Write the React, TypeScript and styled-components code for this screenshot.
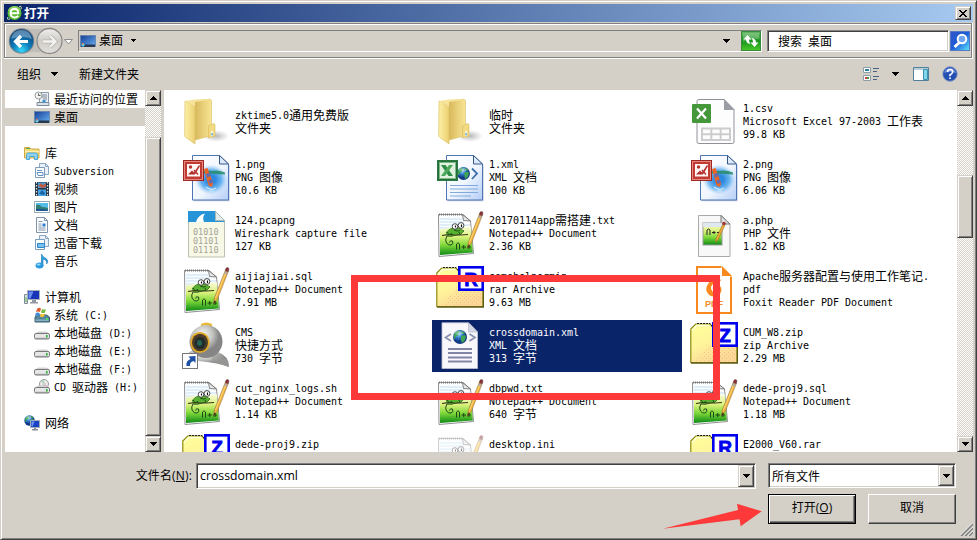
import React from "react";
import styled, { createGlobalStyle, css } from "styled-components";

const FACE = "#d4d0c8";
const CJK = '"Noto Sans CJK SC", sans-serif';

const Global = createGlobalStyle`
  * { box-sizing: border-box; }
  html, body { margin: 0; padding: 0; }
  body { width: 977px; height: 540px; overflow: hidden; background: ${FACE}; color: #000; }
  svg { display: block; flex: none; }
`;

const raised = css`
  background: ${FACE};
  border: 1px solid;
  border-color: ${FACE} #404040 #404040 ${FACE};
  box-shadow: inset 1px 1px #fff, inset -1px -1px #808080;
`;
const sunken = css`
  border: 1px solid;
  border-color: #808080 #fff #fff #808080;
  box-shadow: inset 1px 1px #404040, inset -1px -1px ${FACE};
`;

const Window = styled.div`
  position: relative;
  display: flex;
  flex-direction: column;
  width: 977px;
  height: 540px;
  padding: 3px 2px 0 3px;
  background: ${FACE};
  border: 1px solid;
  border-color: ${FACE} #404040 #404040 ${FACE};
  box-shadow: inset 1px 1px #fff, inset -1px -1px #808080;
  font: 12px/13px ${CJK};
`;
const TitleBar = styled.div`
  display: flex;
  align-items: center;
  width: 969px;
  height: 18px;
  padding: 0 2px 0 3px;
  background: linear-gradient(90deg, #0a246a, #a6caf0);
`;
const Title = styled.div`
  flex: 1;
  padding-left: 2px;
  color: #fff;
  font-size: 12.5px;
  font-weight: 700;
  line-height: 18px;
`;
const CloseButton = styled.button`
  ${raised}
  display: flex;
  align-items: center;
  justify-content: center;
  width: 16px;
  height: 14px;
  padding: 0;
`;
const Band = styled.div`
  width: 969px;
  height: 36px;
  margin-top: 1px;
  border: solid #fff;
  border-width: 0 1px 1px 0;
`;
const BandInner = styled.div`
  display: flex;
  align-items: center;
  height: 35px;
  padding-left: 3px;
  border: 1px solid #808080;
  box-shadow: inset 1px 1px #fff;
`;
const AddressBar = styled.div`
  display: flex;
  align-items: center;
  width: 684px;
  height: 22px;
  margin-left: 5px;
  border: 1px solid;
  border-color: #808080 #fff #fff #808080;
`;
const AddressText = styled.span`
  flex: 1;
  display: flex;
  align-items: center;
  padding-left: 1px;
`;
const AddressLabel = styled.span`
  margin: -2px 8px 0 3px;
`;
const SearchBox = styled.div`
  ${sunken}
  width: 182px;
  height: 22px;
  margin: 0 1px 0 5px;
  padding-left: 10px;
  background: #fff;
  line-height: 20px;
`;
const Toolbar = styled.div`
  display: flex;
  align-items: center;
  width: 969px;
  height: 31px;
  padding: 0 15px 1px 13px;
`;
const ToolLabel = styled.span<{ $gap?: number }>`
  margin: -1px ${(p) => p.$gap ?? 0}px 0 0;
`;
const ArrowCell = styled.span<{ $right: number }>`
  margin-right: ${(p) => p.$right}px;
`;
const ViewTools = styled.div`
  display: flex;
  align-items: center;
  gap: 13px;
  margin-left: auto;
`;

const Body = styled.div`
  display: flex;
  height: 362px;
  padding-left: 1px;
  width: 969px;
`;
const NavPane = styled.div`
  width: 140px;
  height: 362px;
  background: #fff;
`;
const Mixed = styled.span`
  margin-top: -2px;
  white-space: pre;
`;
const Latin = styled.span`
  font: 10px/10px "DejaVu Sans Mono", monospace;
  letter-spacing: -0.02px;
  vertical-align: 1px;
`;
const NavRow = styled.div<{ $root?: boolean; $active?: boolean; $gap?: boolean }>`
  display: flex;
  align-items: center;
  gap: ${(p) => (p.$root ? 5 : 4)}px;
  height: 18px;
  margin-top: ${(p) => (p.$gap ? 18 : 0)}px;
  padding-left: ${(p) => (p.$root ? 19 : 29)}px;
  background: ${(p) => (p.$active ? FACE : "transparent")};
`;
const Files = styled.div`
  flex: 1;
  display: grid;
  grid-template-columns: repeat(3, 250px);
  grid-auto-rows: 52px;
  gap: 4px;
  height: 362px;
  margin-left: 3px;
  padding: 6px 0 0 14px;
  overflow: hidden;
  background: #fff;
`;
const FileTile = styled.div<{ $selected?: boolean }>`
  display: flex;
  align-items: center;
  gap: 5px;
  padding-left: 4px;
  background: ${(p) => (p.$selected ? "#0a246a" : "transparent")};
  color: ${(p) => (p.$selected ? "#fff" : "#000")};
`;
const Lines = styled.div<{ $top?: boolean }>`
  display: flex;
  flex-direction: column;
  ${(p) => (p.$top ? "align-self: flex-start; padding-top: 5px;" : "padding-bottom: 3px;")}
`;
const Line = styled.div`
  height: 13px;
  line-height: 13px;
  white-space: pre;
`;
const ScrollBar = styled.div`
  display: flex;
  flex-direction: column;
  width: 16px;
  height: 362px;
  background: repeating-conic-gradient(#fff 0 25%, ${FACE} 0 50%) 0 0 / 2px 2px;
`;
const ScrollButton = styled.button<{ $h?: number }>`
  ${raised}
  display: flex;
  align-items: center;
  justify-content: center;
  width: 16px;
  height: ${(p) => p.$h ?? 16}px;
  padding: 0;
`;
const Thumb = styled.div<{ $top: number; $h: number }>`
  ${raised}
  height: ${(p) => p.$h}px;
  margin: ${(p) => p.$top}px 0 auto;
`;

const Footer = styled.div`
  display: grid;
  grid-template-columns: 192px 560px 188px;
  padding-top: 11px;
`;
const FieldLabel = styled.label`
  padding-right: 4px;
  font: 12px/25px "Open Sans", ${CJK};
  letter-spacing: 0.15px;
  text-align: right;
  white-space: nowrap;
`;
const Combo = styled.div<{ $h: number }>`
  ${sunken}
  display: flex;
  height: ${(p) => p.$h}px;
  padding: 1px 1px 1px 2px;
  background: #fff;
`;
const ComboText = styled.span<{ $input?: boolean }>`
  flex: 1;
  line-height: 21px;
  padding-left: 1px;
  ${(p) => p.$input && css`font: 12.3px/22px "Open Sans", sans-serif;`}
`;
const FilterCell = styled.div`
  width: 188px;
  margin-left: 12px;
`;
const Buttons = styled.div`
  grid-column: 3;
  display: flex;
  gap: 12px;
  width: 188px;
  margin: 5px 0 0 12px;
`;
const PushButton = styled.button<{ $primary?: boolean }>`
  ${raised}
  width: 88px;
  height: 30px;
  padding: 0 0 2px;
  color: #000;
  font: 12px/24px "Open Sans", ${CJK};
  border-color: ${(p) => (p.$primary ? "#000" : "#fff #404040 #404040 #fff")};
  box-shadow: ${(p) =>
    p.$primary
      ? "inset 1px 1px #fff, inset -1px -1px #404040, inset -2px -2px #808080"
      : "inset -1px -1px #808080"};
`;
const Highlight = styled.div`
  position: absolute;
  left: 350px;
  top: 274px;
  width: 369px;
  height: 125px;
  border: 7px solid #fd3939;
`;
const Pointer = styled.svg`
  position: absolute;
  left: 659px;
  top: 499px;
`;
const Grip = styled.svg`
  position: absolute;
  right: 3px;
  bottom: 3px;
`;
const Defs = styled.svg`
  position: absolute;
`;

/* Latin runs use a 6px-pitch monospaced face beside 12px ideographs. */
function Text({ children }: { children: string }) {
  const runs = children.match(/[\x00-\x7f]+|[^\x00-\x7f]+/g) ?? [];
  return (
    <Mixed>
      {runs.map((r, i) => (r.charCodeAt(0) < 128 ? <Latin key={i}>{r}</Latin> : r))}
    </Mixed>
  );
}

const Arrow = ({ up }: { up?: boolean }) => (
  <svg width="7" height="4" viewBox="0 0 7 4" shapeRendering="crispEdges">
    <path d={up ? "M3 0h1v1h1v1h1v1h1v1H0V3h1V2h1V1h1z" : "M0 0h7v1H6v1H5v1H4v1H3V3H2V2H1V1H0z"} />
  </svg>
);
const SmallArrow = () => (
  <svg width="5" height="3" viewBox="0 0 5 3" shapeRendering="crispEdges">
    <path d="M0 0h5v1H4v1H3v1H2V2H1V1H0z" />
  </svg>
);

const Gradients = () => (
  <Defs width="0" height="0">
    <defs>
      <linearGradient id="fold" x1="0" x2="1"><stop offset="0" stopColor="#fdf0a8" /><stop offset="1" stopColor="#ecd070" /></linearGradient>
      <linearGradient id="foldB" x1="0" x2="1"><stop offset="0" stopColor="#d9b95c" /><stop offset="1" stopColor="#f8e595" /></linearGradient>
      <radialGradient id="shade"><stop offset="0" stopColor="#888" stopOpacity=".6" /><stop offset="1" stopColor="#999" stopOpacity="0" /></radialGradient>
      <linearGradient id="sheet" x1="0" y1="0" x2="1" y2="1"><stop offset="0" stopColor="#fff" /><stop offset=".55" stopColor="#f0f6ff" /><stop offset="1" stopColor="#b4cdf6" /></linearGradient>
      <radialGradient id="lake"><stop offset=".3" stopColor="#2e8ae0" /><stop offset=".65" stopColor="#58abed" stopOpacity=".85" /><stop offset="1" stopColor="#9fd0fa" stopOpacity="0" /></radialGradient>
      <linearGradient id="grass" x1="0" y1="0" x2="0" y2="1"><stop offset="0" stopColor="#f8fcd8" /><stop offset=".35" stopColor="#dcf27e" /><stop offset=".65" stopColor="#7fd83a" /><stop offset="1" stopColor="#0c8a16" /></linearGradient>
      <radialGradient id="globe" cx=".4" cy=".3"><stop offset="0" stopColor="#a5dcfb" /><stop offset=".5" stopColor="#347fd0" /><stop offset="1" stopColor="#123a85" /></radialGradient>
      <radialGradient id="metal" cx=".4" cy=".3"><stop offset="0" stopColor="#fbfbf9" /><stop offset=".6" stopColor="#c3c3c0" /><stop offset="1" stopColor="#858585" /></radialGradient>
      <linearGradient id="zipbody" x1="0" y1="0" x2=".5" y2="1"><stop offset="0" stopColor="#ffff99" /><stop offset=".5" stopColor="#fff59b" /><stop offset="1" stopColor="#fad896" /></linearGradient>
      <pattern id="dither" width="4" height="4" patternUnits="userSpaceOnUse"><path d="M0 0h1v1H0zM2 2h1v1H2z" fill="#ffbd8c" /></pattern>
      <linearGradient id="desk" x1="0" y1="0" x2="1" y2="1"><stop offset="0" stopColor="#163c94" /><stop offset="1" stopColor="#68b2f3" /></linearGradient>
      <radialGradient id="back" cx=".5" cy=".9" r=".9"><stop offset="0" stopColor="#35d7f7" /><stop offset=".45" stopColor="#0c77b5" /><stop offset="1" stopColor="#0b3a6e" /></radialGradient>
      <linearGradient id="fwd" x1="0" y1="0" x2="0" y2="1"><stop offset="0" stopColor="#f0efed" /><stop offset=".5" stopColor="#cfccc7" /><stop offset="1" stopColor="#e2e0dc" /></linearGradient>
      <linearGradient id="go" x1="0" y1="0" x2="0" y2="1"><stop offset="0" stopColor="#67b765" /><stop offset=".5" stopColor="#17931b" /><stop offset="1" stopColor="#4ac827" /></linearGradient>
      <linearGradient id="find" x1="0" y1="0" x2="1" y2="1"><stop offset="0" stopColor="#3353c5" /><stop offset=".5" stopColor="#1c5ed9" /><stop offset="1" stopColor="#5eeaff" /></linearGradient>
      <linearGradient id="tray" x1="0" y1="0" x2="0" y2="1"><stop offset="0" stopColor="#c9c9c9" /><stop offset="1" stopColor="#7b7d80" /></linearGradient>
    </defs>
  </Defs>
);

const FolderIcon = () => (
  <svg width="48" height="48" viewBox="0 0 48 48">
    <ellipse cx="34" cy="38" rx="13" ry="6" fill="url(#shade)" />
    <path d="M13 2.500l15-1.300 1.500 1.300v35L13 42z" fill="url(#foldB)" stroke="#d9bd62" strokeWidth=".6" />
    <path d="M26.500 28l5-2.500 1.500 1v11.500l-6.500 2z" fill="#f2da80" stroke="#d8b95a" strokeWidth=".6" />
    <path d="M29.300 33h1.500v5h-1.500z" fill="#fff" /><path d="M29.500 35h1.200v2.500h-1.200z" fill="#3f9be6" />
    <path d="M3 3l9 4.500c.8.5 1 1 1 2V46L4 39.500c-1-.6-1.300-1.200-1.300-2.500z" fill="url(#fold)" stroke="#dcc169" strokeWidth=".7" />
    <path d="M3 3l10-1.500L27 1l-1 1-13 2v4z" fill="#f6e49b" />
  </svg>
);
const BlueSheet = () => (
  <>
    <path d="M11 2.500h26.500l9.500 8v36H11z" fill="#91a7cc" opacity=".6" transform="translate(.6 .8)" />
    <path d="M10.500 1.500h27l9 8.500v36h-36z" fill="url(#sheet)" stroke="#4e75b2" />
    <path d="M37.500 1.500V10h9z" fill="#dce9fb" stroke="#365889" />
  </>
);
const PngIcon = () => (
  <svg width="48" height="48" viewBox="0 0 48 48">
    <BlueSheet />
    <ellipse cx="29" cy="25.500" rx="16.500" ry="15" fill="url(#lake)" />
    <path d="M18 18.500q6-3 12-1.500 6-1.500 13 1.500v2q-12-1-25-1z" fill="#268b6a" opacity=".85" />
    <path d="M24 33q5 4 10 1M27 37h5" stroke="#ccebff" strokeWidth="1.200" fill="none" />
    <path d="M22 15l3.500-1 5.500 15-1 4-3.500-1.500z" fill="#ed6522" />
    <path d="M24 20l3.500-1.500 1.300 3.500-3.500 1.500zM26.300 26.500l3.500-1.500 1.200 3.500-3.500 1.500z" fill="#6869a8" />
    <rect x="1.500" y="6.500" width="20" height="20" fill="#c23a34" stroke="#9e2723" />
    <rect x="2.500" y="7.500" width="18" height="18" fill="none" stroke="#e58b7e" />
    <rect x="5" y="10" width="13" height="12.500" fill="#fff8f5" />
    <path d="M6 20.500l4-4 2 2 5-7.500 1 1-5 8.500z" fill="#b12d2b" /><circle cx="8.500" cy="13" r="1.700" fill="#b83431" />
    <path d="M12 16l4 4.500" stroke="#b83431" strokeWidth="1.500" />
  </svg>
);
const GlobeArt = ({ x, y, r }: { x: number; y: number; r: number }) => (
  <g transform={`translate(${x} ${y}) scale(${r / 7})`}>
    <circle r="7" fill="url(#globe)" />
    <path d="M-6-2q1-4 5-4.500l1 1-2 1.500 1 2-3 1-1 3-1-1zM1-1l3-1 2 1-1 4-3 3-1-3zM2-6l3 2-1 1-3-1z" fill="#3fa554" />
    <ellipse cx="-1" cy="-4" rx="4" ry="2" fill="#fff" opacity=".3" />
  </g>
);
const XmlExcelIcon = () => (
  <svg width="48" height="48" viewBox="0 0 48 48">
    <BlueSheet />
    <GlobeArt x={27.500} y={19.500} r={6.500} />
    <path d="M36 14.500l5 5-5 5.500" fill="none" stroke="#3d6fad" strokeWidth="1.800" />
    <path d="M14 31.500h28M14 35h28M14 38.500h28M14 42h21" stroke="#82a9dd" />
    <rect x="1.500" y="6.500" width="20" height="20" fill="#1f7137" stroke="#2c7742" />
    <rect x="3.500" y="8.500" width="16" height="16" fill="#dff2e0" stroke="#83b78a" />
    <path d="M5 11h4.500l7.500 11h-4.500z" fill="#2e8c44" /><path d="M17 11h-4L5 22h4z" fill="#4da75d" />
  </svg>
);
const CsvIcon = () => (
  <svg width="48" height="48" viewBox="0 0 48 48">
    <path d="M9 1.500h25l10 10V44q0 1.500-1.500 1.500H9q-2 0-2-2v-40q0-2 2-2z" fill="#fdfdfd" stroke="#8f9299" />
    <path d="M34 1l10.500 11H34z" fill="#9b9da4" />
    <path d="M12 30.500h28v11.500H12zM12 36.300h28M21.300 30.500V42M30.700 30.500V42" fill="none" stroke="#cdcdcd" strokeWidth="2" />
    <rect x="2" y="6" width="19" height="19" rx="1" fill="#45973c" />
    <path d="M7 10.500l9 10M16 10.500l-9 10" stroke="#fff" strokeWidth="2.200" />
  </svg>
);
const PcapIcon = () => (
  <svg width="48" height="48" viewBox="0 0 48 48">
    <path d="M6.500 1.500h27l9 9V47h-36z" fill="#f8f8e7" stroke="#bdc1b1" />
    <path d="M6 1h27.500v9.500h9V12H6z" fill="#2694d6" />
    <path d="M14 12Q16 5 23 3.500q-3 4-1 8.500z" fill="#fff" />
    <path d="M33.500 1.500v9h9z" fill="#e3edeb" stroke="#a9b9ba" />
    <g fill="#a4a498" fontFamily="DejaVu Sans Mono" fontSize="8.500">
      <text x="11" y="24.500">01010</text><text x="11" y="33.500">01101</text><text x="11" y="42.500">01110</text>
    </g>
  </svg>
);
const Pencil = () => (
  <g>
    <path d="M43 5l3 1.300L35.500 33l-4 5 .8-6z" fill="#f2b23c" stroke="#8a6a32" strokeWidth=".5" />
    <path d="M43.800 7L33.500 32" stroke="#ffe08a" strokeWidth=".8" />
    <path d="M32.200 34.500l2 .8L31.300 39z" fill="#4a3d28" />
    <path d="M43 4.500l1-2.300q1.500-1.500 3 .3l-.7 3.500z" fill="#8e3034" stroke="#5d4040" strokeWidth=".5" />
    <path d="M42.300 6.500l3.500 1.500" stroke="#a9a9b8" strokeWidth="1.400" />
  </g>
);
const NppIcon = ({ faded }: { faded?: boolean }) => (
  <svg width="48" height="48" viewBox="0 0 48 48">
    <g opacity={faded ? 0.45 : 1}>
      <path d="M2.500 4.500H27l7.500 6.500L37.500 43.500l-34.500 3z" fill="#fbfdff" stroke="#909090" />
      <path d="M3 4.500h24" stroke="#777" strokeDasharray="1 1" strokeWidth="2" />
      <path d="M4 9h22M4 12h24M4 15h30M4 18h30" stroke="#c4dff2" />
      <path d="M26.500 4.500l1 6 7 .5z" fill="#e8e8e8" stroke="#666" strokeWidth=".8" />
      <path d="M4 19.500q13-3 31-3l1.800 26L4 45z" fill={faded ? "#ededed" : "url(#grass)"} />
      <path d="M10 23q4-6 12-5l6 3-3 3-5 1q-5 2-9 1-2 3-1 6 2 4 5 3 3-1 1.500-4-2.500-1-3 1.500" fill="none" stroke="#234a1c" strokeWidth="1" />
      <path d="M10 23q4-6 12-5l6 3-3 3-5 1q-5 2-9 1z" fill={faded ? "#ddd" : "#58b030"} />
      <path d="M6 25.500q8-1.500 12-.5 7 0 14-.5" fill="none" stroke="#3a3a1c" strokeWidth="1.100" />
      <path d="M11 22l2 2.500M15 23l1.500 2.500M23 22l1 2.500M18 20q3 2 6 .5" fill="none" stroke="#173a12" strokeWidth=".8" />
      <circle cx="19" cy="16.500" r="2.800" fill="#fff" stroke="#333" strokeWidth=".9" /><circle cx="25" cy="15.500" r="2.900" fill="#fff" stroke="#333" strokeWidth=".9" />
      <path d="M19.500 15.500v2M25.500 14.500v2.500" stroke="#111" strokeWidth="1.200" />
      <path d="M20.500 39.500V34q1.500-2.500 3 0v5.500M25.500 37h4.500M27.700 35v4M31 37h4M33 35v4" fill="none" stroke="#16380f" strokeWidth=".9" />
      <Pencil />
    </g>
  </svg>
);
const PhpIcon = () => (
  <svg width="48" height="48" viewBox="0 0 48 48">
    <path d="M8.500 5.500h23l8.500 9V46.500H8.500z" fill="#f8f8f8" stroke="#aaa" />
    <path d="M31 5.500v8.500h9z" fill="#ddd" stroke="#777" />
    <rect x="13" y="13" width="19" height="22" fill="url(#grass)" stroke="#9b9b9b" />
    <path d="M13 13h19v4H13z" fill="#dfe8ee" />
    <path d="M17 25v-5q1.500-2 3 0v5M22 22.500h3.500M24 21v3M27 22.500h3" fill="none" stroke="#222" />
    <path d="M33 14l2 1-7 15-2.500 2.500.5-4z" fill="#edac38" stroke="#85601f" strokeWidth=".5" />
    <circle cx="34" cy="13.500" r="1.800" fill="#a1393c" />
  </svg>
);
const ArchiveIcon = ({ rar }: { rar?: boolean }) => (
  <svg width="48" height="48" viewBox="0 0 48 48">
    <path d="M.8 7l5-5H20l4 5v5h23v28.500H.8z" fill="url(#zipbody)" stroke="#8c8a10" strokeWidth="1.200" />
    <path d="M20 24h26v16H5z" fill="url(#dither)" />
    <path d="M2 8.500L6.500 3.500H19" fill="none" stroke="#ffffd9" strokeWidth="1.500" />
    <path d="M1 41h46.500V25" fill="none" stroke="#5c5a14" strokeWidth="1.500" />
    <path d="M7 1.500h13l3 4" fill="none" stroke="#222" strokeDasharray="2 1" />
    <rect x="23.300" y="1.300" width="23.400" height="22.400" fill="#fff" stroke="#0000ee" strokeWidth="2.600" />
    <text x="35" y="19.500" textAnchor="middle" fontFamily="Liberation Sans" fontWeight="700" fontSize="19" fill="#00e" stroke="#00e" strokeWidth=".8">{rar ? "R" : "Z"}</text>
  </svg>
);
const CameraIcon = () => (
  <svg width="48" height="48" viewBox="0 0 48 48">
    <path d="M5 32q10-10 31-2 11 4 11 15-9-4-30-6z" fill="url(#metal)" />
    <path d="M31 30q15 4 16 15-9-4-18-5z" fill="#9b9b98" opacity=".7" />
    <path d="M19 2q5-3 11 0v3H19z" fill="#eab832" />
    <ellipse cx="24" cy="19.500" rx="16.500" ry="16.500" fill="url(#metal)" />
    <ellipse cx="18" cy="20.500" rx="9.700" ry="10.500" fill="#e4aa22" />
    <ellipse cx="18" cy="20.500" rx="8" ry="8.800" fill="#4a3d2c" />
    <ellipse cx="18" cy="21" rx="5.500" ry="6" fill="#242b2b" /><ellipse cx="17.500" cy="21" rx="2.500" ry="3" fill="#246452" />
    <rect x=".5" y="31.500" width="15" height="15" fill="#fff" stroke="#777" />
    <path d="M4.500 44q-1-5 4-7l-2-2.500 7-.5v7l-2-2q-4 1-3.500 5z" fill="#1e4fa5" />
  </svg>
);
const XmlIcon = () => (
  <svg width="48" height="48" viewBox="0 0 48 48">
    <g transform="translate(-3 0)">
      <path d="M9 .8h26.500L44.500 10v36.500H9z" fill="#f7f7fc" stroke="#c2c2d0" strokeWidth=".8" />
      <path d="M35.500.8V10h9z" fill="#d6d7e5" stroke="#b5b7c8" strokeWidth=".7" />
      <GlobeArt x={27} y={15} r={7} />
      <path d="M18 12l-5.500 3.500 5.500 3.500M36.500 12l5.500 3.500-5.500 3.500" fill="none" stroke="#8b8fb0" strokeWidth="1.700" />
      <path d="M15 27h24M15 31h24M15 35.500h24M15 39.500h24" stroke="#8385a6" strokeWidth="1.800" />
    </g>
  </svg>
);
const PdfIcon = () => (
  <svg width="48" height="48" viewBox="0 0 48 48">
    <path d="M31.500 1H7v46h34V10.500" fill="#fff" stroke="#f7891e" strokeWidth="2" />
    <path d="M32 0l10 10H32z" fill="#f7891e" />
    <path d="M32 14q-8-2-12.500 2-4 4.500-3 9 2 5.500 8 5.500 7-1 7-7-1-6-7-5l-2 4q3-1 3 2-1 3-3 1-3-4 0-7 4-3 9.500-4.500z" fill="#f7891e" />
    <text x="24" y="40.500" textAnchor="middle" fontFamily="Liberation Sans" fontWeight="700" fontSize="9" fill="#f7891e">PDF</text>
  </svg>
);

const icons: Record<string, React.ReactNode> = {
  folder: <FolderIcon />, png: <PngIcon />, xlsxml: <XmlExcelIcon />, csv: <CsvIcon />, pcap: <PcapIcon />,
  npp: <NppIcon />, ini: <NppIcon faded />, php: <PhpIcon />, rar: <ArchiveIcon rar />, zip: <ArchiveIcon />,
  cam: <CameraIcon />, xml: <XmlIcon />, pdf: <PdfIcon />,
};

const files: [string, string[], boolean?][] = [
  ["folder", ["zktime5.0通用免费版", "文件夹"]],
  ["folder", ["临时", "文件夹"]],
  ["csv", ["1.csv", "Microsoft Excel 97-2003 工作表", "99.8 KB"]],
  ["png", ["1.png", "PNG 图像", "10.6 KB"]],
  ["xlsxml", ["1.xml", "XML 文档", "100 KB"]],
  ["png", ["2.png", "PNG 图像", "6.06 KB"]],
  ["pcap", ["124.pcapng", "Wireshark capture file", "127 KB"]],
  ["npp", ["20170114app需搭建.txt", "Notepad++ Document", "2.36 KB"]],
  ["php", ["a.php", "PHP 文件", "1.82 KB"]],
  ["npp", ["aijiajiai.sql", "Notepad++ Document", "7.91 MB"]],
  ["rar", ["somehelpermin", "rar Archive", "9.63 MB"]],
  ["pdf", ["Apache服务器配置与使用工作笔记.", "pdf", "Foxit Reader PDF Document"]],
  ["cam", ["CMS", "快捷方式", "730 字节"]],
  ["xml", ["crossdomain.xml", "XML 文档", "313 字节"], true],
  ["zip", ["CUM_W8.zip", "zip Archive", "2.29 MB"]],
  ["npp", ["cut_nginx_logs.sh", "Notepad++ Document", "1.14 KB"]],
  ["npp", ["dbpwd.txt", "Notepad++ Document", "640 字节"]],
  ["npp", ["dede-proj9.sql", "Notepad++ Document", "1.18 MB"]],
  ["zip", ["dede-proj9.zip"]],
  ["ini", ["desktop.ini"]],
  ["rar", ["E2000_V60.rar"]],
];

const S = ({ children }: { children: React.ReactNode }) => (
  <svg width="16" height="16" viewBox="0 0 16 16">{children}</svg>
);
const DesktopIcon = () => (
  <S>
    <rect x=".5" y="2.500" width="15" height="11" fill="url(#desk)" stroke="#6483a8" strokeWidth=".8" />
    <path d="M1 11.500h14V14H1z" fill="#29384f" />
    <path d="M1 12l2-2 2 2-2 2z" fill="#5fd1f3" /><path d="M2 10h1.500v1.500H2z" fill="#ef6f38" />
  </S>
);
const Disk = ({ children }: { children?: React.ReactNode }) => (
  <S>
    {children}
    <path d="M2 8.500l2-1.500h8.500l2.500 1.500H2z" fill="#e0e0e0" stroke="#aaa" strokeWidth=".5" />
    <rect x=".5" y="8.500" width="15" height="5.500" rx="1.500" fill="#e7e7e7" stroke="#77797c" />
    <path d="M1.500 12.500h13v1h-13z" fill="url(#tray)" /><rect x="12" y="10" width="1.600" height="2.500" fill="#2eb535" />
  </S>
);
const Sheet = ({ children }: { children?: React.ReactNode }) => (
  <S>
    <path d="M5.500.5h6l3 3v8h-9z" fill="#e9f2fb" stroke="#8ba6c2" />
    <path d="M1.500 4.500h9v10h-9z" fill="#fff" stroke="#7c9cbc" /><path d="M11.500.5v3h3" fill="none" stroke="#8ba6c2" />
    {children}
  </S>
);
const nav: { t: string; i: React.ReactNode; root?: boolean; gap?: boolean; active?: boolean }[] = [
  { t: "最近访问的位置", i: <S><path d="M5.500 1.500h9v11h-9z" fill="#e7edf3" stroke="#8b98a5" /><path d="M7 4h6M7 6h6M9 8h4M3 14.500h12v-3H3z" stroke="#7c8a98" fill="#dde3e8" /><circle cx="4.500" cy="4.500" r="3.500" fill="#f6f6ee" stroke="#949da4" /><path d="M4.500 2.500v2h2" stroke="#555" fill="none" /><path d="M8.500 9h3v3h-3z" fill="#468fc8" /></S> },
  { t: "桌面", i: <DesktopIcon />, active: true },
  { t: "库", root: true, gap: true, i: <S><path d="M.5 2.500h5l1.500 1.500h8v9H.5z" fill="#f4dc7d" stroke="#cfaa45" /><path d="M2 3.500h4" stroke="#4cac4a" /><path d="M1 6h14v1H1z" fill="#fff1ae" /><path d="M2.500 9.500q0-1.500 2-1.500h7q2 0 2 1.500v5h-3v-3h-5v3h-3z" fill="#8ed2f2" stroke="#4ba5d4" /></S> },
  { t: "Subversion", i: <Sheet><path d="M3 7.500h5M3 9.500h6v3H4z" stroke="#5f91c5" fill="none" /></Sheet> },
  { t: "视频", i: <S><path d="M1 1h14v14H1z" fill="#263442" /><path d="M4 1.500h8V7H4zM4 8.500h8V15H4z" fill="#47a4e0" /><path d="M4 5l3-3 2 2 3-2v4L8 7z" fill="#bc5944" /><path d="M5 13l3-4 3 3-1 2z" fill="#1763a5" /><path d="M2.500 1v14M13.500 1v14" stroke="#dce5ea" strokeDasharray="1.500 1.500" strokeWidth="1.300" /></S> },
  { t: "图片", i: <S><path d="M.5 2.500h15v11H.5z" fill="#fff" stroke="#94a9b7" /><path d="M2 4h12v8H2z" fill="#55bde8" /><path d="M2 6q4-1 6 2 3 0 6 1v3H2z" fill="#347f75" /><path d="M2 10q6-1 12 1v1H2z" fill="#1c5991" /></S> },
  { t: "文档", i: <S><path d="M2.500.5h8l3 3v12h-11z" fill="#fbfcfd" stroke="#8294aa" /><path d="M10.500.5v3h3M4.500 4.500h4M4.500 7h3M4.500 9h3M4.500 11h7M4.500 13h7" stroke="#8294aa" fill="none" /><path d="M8.500 6.500h3v3h-3z" fill="#2c7ed0" /></S> },
  { t: "迅雷下载", i: <Sheet><path d="M3.500 8.500h7v4h-7z" fill="#77c0ef" stroke="#2e86c8" /></Sheet> },
  { t: "音乐", i: <S><path d="M7.500 12V1q1 3 4 4 4 3 1 6 1-4-3.500-5v7" fill="#2ea1dd" stroke="#1673b9" strokeWidth=".6" /><ellipse cx="5.500" cy="12.500" rx="4" ry="3" fill="#2b9ade" /><ellipse cx="4.500" cy="11.500" rx="2" ry="1" fill="#91d8f7" /></S> },
  { t: "计算机", root: true, gap: true, i: <S><path d="M.5 5.500h3v9h-3z" fill="#dbe0e5" stroke="#808a94" /><path d="M1.500 8h1v5h-1z" fill="#5aba55" /><path d="M3.500 1.500h12v9h-12z" fill="#1834b7" stroke="#aab0bb" /><path d="M4.500 2.500h5l-3 7h-2z" fill="#688ff0" /><path d="M8 11h4v2h2v1.500H6V13h2z" fill="#9298a0" /></S> },
  { t: "系统 (C:)", i: <S><path d="M1 10l3-2h8.500l3 2v5H1z" fill="#54879d" stroke="#406070" /><path d="M1.500 12.500h13v1.500h-13z" fill="#89b1bf" /><rect x="12" y="11" width="2" height="2" fill="#50dd5b" /><path d="M3 2q2-2 4-.5L6 5q-2-1-4 0z" fill="#e35a2b" /><path d="M8 2q2 1 4 0l-1 3.500q-2 1-4 0z" fill="#76bb3d" /><path d="M1.800 6q2-1 4 0L5 9q-2-1-4 0z" fill="#3f8cdb" /><path d="M6.700 6.500q2 1 4 0L10 9.500q-2 1-4 0z" fill="#f2c535" /></S> },
  { t: "本地磁盘 (D:)", i: <Disk /> },
  { t: "本地磁盘 (E:)", i: <Disk /> },
  { t: "本地磁盘 (F:)", i: <Disk /> },
  { t: "CD 驱动器 (H:)", i: <Disk><circle cx="10" cy="5" r="4.500" fill="#ececec" stroke="#989898" /><path d="M10 5L7 2l3-1z" fill="#a9d6b4" /><path d="M10 5l4 2-3 2z" fill="#e8b8cf" /><circle cx="10" cy="5" r="1.200" fill="#fff" stroke="#888" strokeWidth=".5" /></Disk> },
  { t: "网络", root: true, gap: true, i: <S><GlobeArt x={5.500} y={5.500} r={5.200} /><path d="M6.500 5.500h9v7h-9z" fill="#1843c3" stroke="#a2acb8" /><path d="M7.500 6.500h3l-2 5h-1z" fill="#6997f1" /><path d="M10 13h2v1h2v1.500H8V14h2z" fill="#8a9099" /></S> },
];

export default function App() {
  return (
    <Window>
      <Global />
      <Gradients />
      <TitleBar>
        <svg width="15" height="16" viewBox="0 0 15 16">
          <circle cx="7.500" cy="8" r="7" fill="#58ba32" /><path d="M.8 6Q2 1 8 1q5 0 6 5" fill="#a7df6c" opacity=".6" />
          <path d="M11.300 10.800q-1.600 1.700-3.800 1.700-4-.5-4-4.500 0-4 4-4.300 3.800.3 3.800 4.500H4" fill="none" stroke="#fff" strokeWidth="1.900" />
          <path d="M1 12q-2 3 2 2M12 2q3-2 2 2" stroke="#d6f5a0" fill="none" />
        </svg>
        <Title>打开</Title>
        <CloseButton aria-label="关闭">
          <svg width="8" height="7" viewBox="0 0 8 7" shapeRendering="crispEdges">
            <path d="M0 0h2v1h1v1h2V1h1V0h2v1H7v1H6v1H5v1h1v1h1v1h1v1H6V6H5V5H3v1H2v1H0V6h1V5h1V4h1V3H2V2H1V1H0z" />
          </svg>
        </CloseButton>
      </TitleBar>
      <Band>
        <BandInner>
          <svg width="65" height="30" viewBox="0 0 65 30">
            <path d="M13.500 1.500q14 3 28 0a13 13 0 010 26q-14-3-28 0z" fill="#c1beb8" />
            <circle cx="13.500" cy="15" r="12.800" fill="#7f8790" /><circle cx="13.500" cy="15" r="11.800" fill="url(#back)" />
            <path d="M3 13Q5 4 13.500 4 22 4 24 13q-10-4-21 0z" fill="#b8d5ea" opacity=".45" />
            <path d="M20 15.500H8M13 10l-5.500 5.500L13 21" fill="none" stroke="#fff" strokeWidth="3.200" />
            <circle cx="41.500" cy="15" r="12.500" fill="url(#fwd)" stroke="#8d8c8a" strokeWidth="1.300" />
            <path d="M35 15.500h12M42 10l5.500 5.500L42 21" fill="none" stroke="#b4b1ac" strokeWidth="3.800" />
            <path d="M35 15.500h12M42 10l5.500 5.500L42 21" fill="none" stroke="#f3f2f0" strokeWidth="2.400" />
            <path d="M56.500 13.500h8l-4 4.500z" fill="#fff" stroke="#8b8b8b" />
          </svg>
          <AddressBar>
            <AddressText>
              <DesktopIcon />
              <AddressLabel>桌面</AddressLabel>
              <SmallArrow />
            </AddressText>
            <ArrowCell $right={11}><Arrow /></ArrowCell>
            <svg width="20" height="20" viewBox="0 0 20 20">
              <rect x=".5" y=".5" width="19" height="19" fill="url(#go)" stroke="#378c3c" />
              <path d="M2 2h16v6q-8-1-16 3z" fill="#fff" opacity=".22" />
              <path d="M2.500 8.500L6.500 4l4 4.500H8q0 3 1.500 4.500Q5 12.500 5 8.500zM17.500 11.500l-4 4.500-4-4.500H12q0-3-1.500-4.500Q15 7.500 15 11.500z" fill="#fff" />
            </svg>
          </AddressBar>
          <SearchBox><Text>搜索 桌面</Text></SearchBox>
          <svg width="20" height="20" viewBox="0 0 20 20">
            <rect x=".5" y=".5" width="19" height="19" fill="url(#find)" stroke="#5579c5" />
            <path d="M10 11l-5.500 5" stroke="#fff" strokeWidth="3" />
            <circle cx="12" cy="8" r="4.300" fill="#6fa5f0" stroke="#fff" strokeWidth="2" />
          </svg>
        </BandInner>
      </Band>
      <Toolbar>
        <ToolLabel $gap={10}>组织</ToolLabel>
        <ArrowCell $right={21}><Arrow /></ArrowCell>
        <ToolLabel>新建文件夹</ToolLabel>
        <ViewTools>
          <S>
            <path d="M.5 1.500h7v5h-7zM.5 9.500h7v5h-7z" fill="#fff" stroke="#8b9eaa" />
            <path d="M2 3h4v2H2z" fill="#2d7ea5" /><path d="M2 11h2v2H2z" fill="#d1403a" /><path d="M4 11h2v2H4z" fill="#3f9c40" />
            <path d="M10 2.500h6M10 5.500h4M10 10.500h6M10 13.500h4" stroke="#48627f" />
          </S>
          <ArrowCell $right={1}><Arrow /></ArrowCell>
          <S>
            <path d="M.5 1.500h15v13H.5z" fill="#fff" stroke="#52809b" /><path d="M1 2h14v2H1z" fill="#b8cedb" />
            <path d="M10.500 3.500h4v10h-4z" fill="#7fd6ed" stroke="#3c93ae" />
          </S>
          <S>
            <circle cx="8" cy="8" r="7.400" fill="#2450b4" stroke="#a1acc5" /><path d="M2 7q1-5 6-5t6 5q-6-2-12 0z" fill="#8aa9e6" opacity=".6" />
            <path d="M5.500 6q0-2.500 2.600-2.500T10.700 6Q10.500 7.500 8 9v1.300M8 11.500v1.600" fill="none" stroke="#fff" strokeWidth="1.700" />
          </S>
        </ViewTools>
      </Toolbar>
      <Body>
        <NavPane>
          {nav.map((n) => (
            <NavRow key={n.t} $root={n.root} $gap={n.gap} $active={n.active}>
              {n.i}
              <Text>{n.t}</Text>
            </NavRow>
          ))}
        </NavPane>
        <ScrollBar>
          <ScrollButton><Arrow up /></ScrollButton>
          <Thumb $top={31} $h={299} />
          <ScrollButton><Arrow /></ScrollButton>
        </ScrollBar>
        <Files>
          {files.map(([icon, lines, selected]) => (
            <FileTile key={lines[0]} $selected={selected}>
              {icons[icon]}
              <Lines $top={lines.length === 1}>
                {lines.map((l) => <Line key={l}><Text>{l}</Text></Line>)}
              </Lines>
            </FileTile>
          ))}
        </Files>
        <ScrollBar>
          <ScrollButton><Arrow up /></ScrollButton>
          <Thumb $top={69} $h={63} />
          <ScrollButton><Arrow /></ScrollButton>
        </ScrollBar>
      </Body>
      <Footer>
        <FieldLabel>文件名(<u>N</u>):</FieldLabel>
        <Combo $h={26}>
          <ComboText $input>crossdomain.xml</ComboText>
          <ScrollButton $h={22}><Arrow /></ScrollButton>
        </Combo>
        <FilterCell>
          <Combo $h={25}>
            <ComboText>所有文件</ComboText>
            <ScrollButton $h={21}><Arrow /></ScrollButton>
          </Combo>
        </FilterCell>
        <Buttons>
          <PushButton $primary>打开(<u>O</u>)</PushButton>
          <PushButton>取消</PushButton>
        </Buttons>
      </Footer>
      <Grip width="13" height="13" viewBox="0 0 13 13">
        <path d="M1 13L13 1M5 13l8-8M9 13l4-4" stroke="#808080" strokeWidth="1.800" />
        <path d="M0 12.500L12.500 0M4 12.500L13 4M8 12.500L13 8" stroke="#fff" strokeWidth=".8" />
      </Grip>
      <Highlight />
      <Pointer width="106" height="34" viewBox="660 500 106 34">
        <path d="M662.700 528.700L738 510l-1-6.300 24.700 7.600-21 15-1.200-7z" fill="#fd3939" />
      </Pointer>
    </Window>
  );
}
